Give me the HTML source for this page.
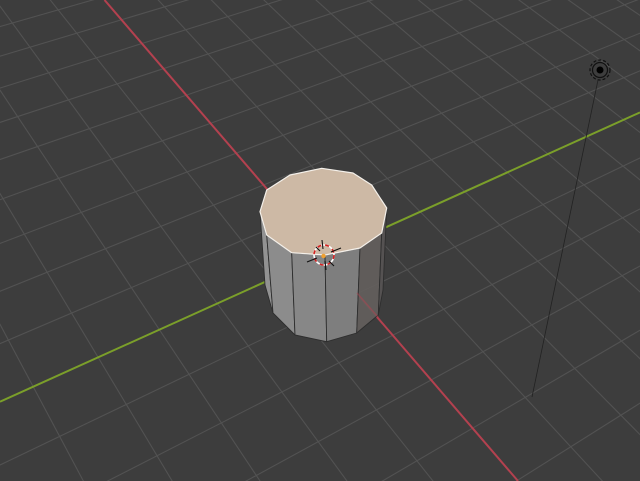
<!DOCTYPE html>
<html><head><meta charset="utf-8"><style>
html,body{margin:0;padding:0;background:#3d3d3d;overflow:hidden;width:640px;height:481px}
svg{display:block;position:absolute;left:0;top:0;overflow:hidden}
</style></head><body>
<svg id="s" width="640" height="481" viewBox="0 0 640 481" xmlns="http://www.w3.org/2000/svg">
<defs><clipPath id="c"><rect width="640" height="481"/></clipPath></defs>
<g clip-path="url(#c)">
<rect width="640" height="481" fill="#3d3d3d"/>
<g id="grid" stroke="#525252" stroke-width="1.1" fill="none"></g>
<line x1="104.5" y1="0" x2="518" y2="481" stroke="#b3414f" stroke-width="2"/>
<line x1="0" y1="401.7" x2="640" y2="112.4" stroke="#7b9f2a" stroke-width="2"/>
<g stroke="#2e2e2e" stroke-width="0.9" stroke-linejoin="round">
<polygon points="260,211.7 266.7,235 273,313 265,285" fill="#929292"/>
<polygon points="266.7,235 291.7,252.7 295,335 273,313" fill="#8c8c8c"/>
<polygon points="291.7,252.7 325,255 326.7,341.7 295,335" fill="#878787"/>
<polygon points="325,255 360,248 356.7,333 326.7,341.7" fill="#7e7e7e"/>
<polygon points="360,248 381.7,233 378.3,315 356.7,333" fill="#635f5d" fill-opacity="0.93"/>
<polygon points="381.7,233 386.7,208 383,290 378.3,315" fill="#555252"/>
</g>
<line x1="357" y1="293" x2="378" y2="317" stroke="#b3414f" stroke-width="1.5" opacity="0.45"/>
<polygon points="321.7,168.3 353,173 371.7,185 386.7,208 381.7,233 360,248 325,255 291.7,252.7 266.7,235 260,211.7 266.7,190 290,175" fill="#cdb9a5" stroke="#f4f0ea" stroke-width="1.2" stroke-linejoin="round"/>
<g>
<circle cx="324" cy="255" r="10" fill="none" stroke="#fff" stroke-width="1.6"/>
<circle cx="324" cy="255" r="10" fill="none" stroke="#d42020" stroke-width="1.6" stroke-dasharray="4 4"/>
<line x1="307" y1="262" x2="317" y2="258" stroke="#111" stroke-width="1.1"/>
<line x1="331" y1="252" x2="341" y2="248" stroke="#111" stroke-width="1.1"/>
<line x1="322" y1="240" x2="323" y2="249" stroke="#111" stroke-width="1.1"/>
<line x1="325" y1="261" x2="326" y2="270" stroke="#111" stroke-width="1.1"/>
<line x1="316" y1="247" x2="320" y2="251" stroke="#111" stroke-width="1.1"/>
<line x1="329" y1="261" x2="334" y2="266" stroke="#111" stroke-width="1.1"/>
<circle cx="323.5" cy="256" r="2.2" fill="#f0a030"/>
</g>
<line x1="598" y1="80" x2="532" y2="397" stroke="#222" stroke-width="0.8"/>
<circle cx="600" cy="70" r="10" fill="none" stroke="#111" stroke-width="1.2" stroke-dasharray="3 2"/>
<circle cx="600" cy="70" r="7.5" fill="none" stroke="#111" stroke-width="1.2"/>
<circle cx="600" cy="70" r="3.5" fill="#000"/>
</g>
</svg>
<script>
(function(){
var g=document.getElementById('grid'),out='';
var VP1=[-622,-845],VP2=[2270,-624];
function L(a,b){
 var ex=b[0]+(b[0]-a[0])*20, ey=b[1]+(b[1]-a[1])*20;
 out+='<line x1="'+a[0]+'" y1="'+a[1]+'" x2="'+ex+'" y2="'+ey+'"/>';
}
for(var k=-60;k<=28;k++){
 if(k===0)continue;
 var d=37.4*k/(1-0.034*k);var y=255+d;var x=104.5+0.86*y;
 L(VP2,[x,y]);
}
for(var j=-37;j<=90;j++){
 if(j===0)continue;
 var e=50.6*j/(1+0.026*j);var x=324+e;var y=401.7-0.452*x;
 L(VP1,[x,y]);
}
g.innerHTML=out;
})();
</script>
</body></html>
